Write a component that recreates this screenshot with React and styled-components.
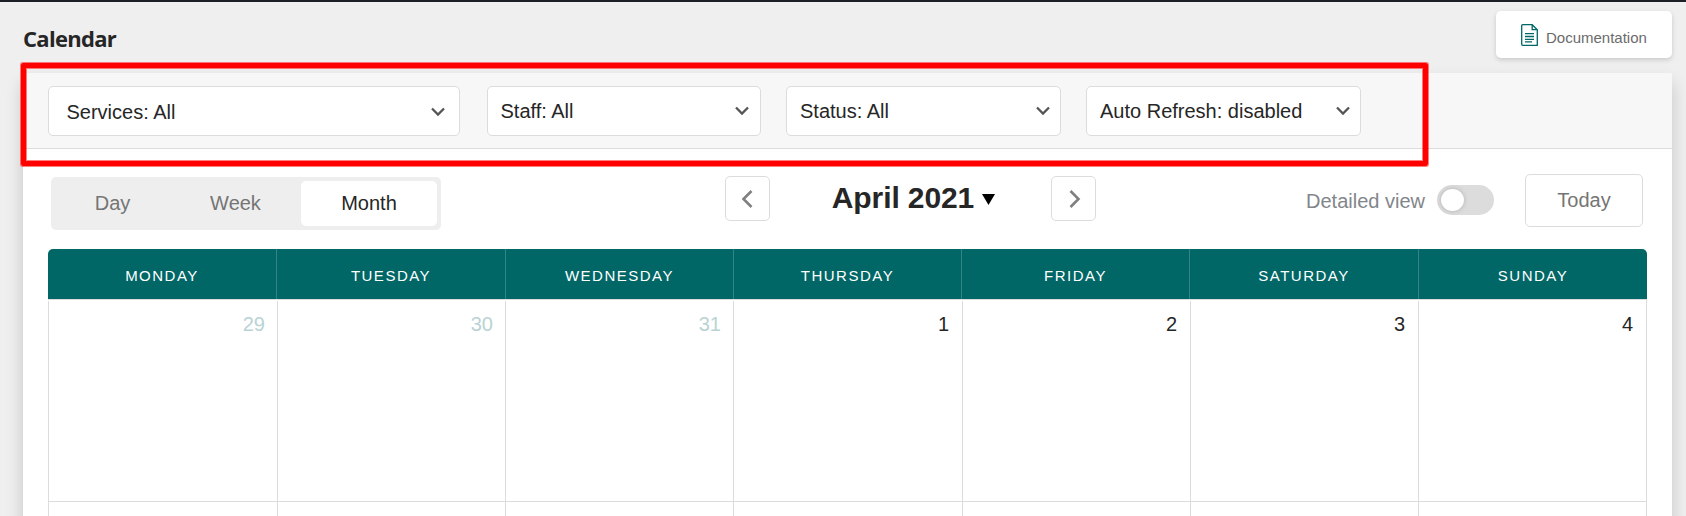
import React from "react";
import styled, { createGlobalStyle } from "styled-components";

const Global = createGlobalStyle`
  * { box-sizing: border-box; }
  body {
    margin: 0;
    background: #efefef;
    font-family: "Liberation Sans", Arial, sans-serif;
    font-size: 20px;
    color: #262626;
    overflow: hidden;
  }
  button { font: inherit; color: inherit; margin: 0; padding: 0; background: none; border: 0; }
`;

const Page = styled.div`
  position: relative;
  height: 516px;
  overflow: hidden;
  border-top: 2px solid #1d2125;
  padding: 0 14px 0 23px;
`;

const PageHeader = styled.header`
  display: flex;
  justify-content: space-between;
  align-items: flex-start;
  height: 71px;
  padding-top: 9px;
`;

const Title = styled.h1`
  margin: 10px 0 0;
  font: 700 22px/34px "Open Sans", sans-serif;
  letter-spacing: -0.7px;
`;

const DocButton = styled.button`
  display: flex;
  align-items: center;
  gap: 8px;
  width: 176px;
  height: 47px;
  padding-left: 25px;
  border-radius: 5px;
  background: #fff;
  box-shadow: 0 2px 5px rgba(0, 0, 0, 0.16);
  font-size: 15px;
  color: #6b6b6b;

  span { margin-top: 6px; }
`;

const Panel = styled.main`
  height: 520px;
  background: #fff;
  box-shadow: 0 10px 16px rgba(0, 0, 0, 0.18);
`;

const Filters = styled.div`
  display: flex;
  gap: 25px;
  height: 76px;
  padding: 13px 25px 0;
  background: #f7f7f7;
  border-bottom: 1px solid #dcdcdc;
`;

const Select = styled.button`
  display: flex;
  align-items: center;
  justify-content: space-between;
  width: ${(p) => p.$width}px;
  height: 50px;
  padding: 0 ${(p) => p.$end}px 0 ${(p) => p.$inset}px;
  margin-right: ${(p) => p.$after || 0}px;
  background: #fff;
  border: 1px solid #dcdcdc;
  border-radius: 5px;

  > * { margin-top: ${(p) => p.$drop || 0}px; }
`;

const Toolbar = styled.div`
  display: grid;
  grid-template-columns: 674px auto 1fr;
  align-items: start;
  height: 100px;
  padding: 25px 29px 0 28px;
`;

const Segments = styled.div`
  display: flex;
  width: 390px;
  height: 53px;
  margin-top: 3px;
  padding: 4px;
  background: #eee;
  border-radius: 5px;
`;

const Segment = styled.button`
  width: ${(p) => p.$width}px;
  height: 45px;
  border-radius: 5px;
  color: ${(p) => (p.$active ? "#262626" : "#757575")};
  background: ${(p) => (p.$active ? "#fff" : "transparent")};
`;

const MonthNav = styled.div`
  display: flex;
  align-items: center;
  margin-top: 2px;
`;

const NavButton = styled.button`
  display: grid;
  place-items: center;
  width: 45px;
  height: 45px;
  border: 1px solid #dcdcdc;
  border-radius: 5px;
`;

const MonthLabel = styled.div`
  display: flex;
  align-items: center;
  justify-content: center;
  gap: 8px;
  width: 281px;
  padding: 0 0 1px 6px;
  font-size: 30px;
  font-weight: 700;
  letter-spacing: -0.1px;

  svg { margin-top: 3px; }
`;

const ViewOptions = styled.div`
  display: flex;
  justify-content: flex-end;
  align-items: center;
  color: #82868b;

  span { margin-top: 1px; }
`;

const Switch = styled.div`
  width: 57px;
  height: 30px;
  margin: 0 31px 1px 12px;
  padding: 4px;
  border-radius: 15px;
  background: #dcdcdc;
`;

const Knob = styled.div`
  width: 23px;
  height: 22px;
  border-radius: 50%;
  background: #fff;
  box-shadow: 0 0 5px rgba(0, 0, 0, 0.2);
`;

const TodayButton = styled.button`
  width: 118px;
  height: 53px;
  border: 1px solid #dcdcdc;
  border-radius: 5px;
  color: #757575;
`;

const Calendar = styled.section`
  margin: 0 25px;
`;

const Weekdays = styled.div`
  display: grid;
  grid-template-columns: 228px 229px 228px 228px 228px 229px 229px;
  height: 50px;
  background: #006666;
  border-radius: 5px 5px 0 0;
`;

const Weekday = styled.div`
  display: grid;
  place-items: center;
  font-size: 15px;
  letter-spacing: 1.5px;
  color: #fff;
  padding-top: 2px;
  & + & { border-left: 1px solid #338585; }
`;

const Week = styled.div`
  display: grid;
  grid-template-columns: 229px 228px 228px 229px 228px 228px 228px;
  height: 203px;
  border-bottom: 1px solid #dcdcdc;
  border-right: 1px solid #dcdcdc;
  border-top: ${(p) => (p.$first ? "1px solid #dcdcdc" : "0")};
  padding-top: ${(p) => (p.$first ? 1 : 0)}px;
`;

const Day = styled.div`
  padding: 12px ${(p) => (p.$muted ? 12 : 13)}px 0 0;
  text-align: right;
  line-height: 23px;
  color: ${(p) => (p.$muted ? "#b9d3d4" : "#262626")};
  border-left: 1px solid #dcdcdc;
`;

const Highlight = styled.div`
  position: absolute;
  left: 21px;
  top: 61px;
  width: 1407px;
  height: 103px;
  border: 5px solid #f00;
  border-radius: 2px;
  box-shadow: 0 0 0 1px rgba(255, 0, 0, 0.5), inset 0 0 0 1px rgba(255, 0, 0, 0.5);
  pointer-events: none;
`;

const Chevron = () => (
  <svg width="20" height="20" viewBox="0 0 20 20" fill="none" stroke="#555" strokeWidth="2.3">
    <path d="M4 6.5l6 6 6-6" />
  </svg>
);

const Arrow = ({ d }) => (
  <svg width="20" height="20" viewBox="0 0 20 20" fill="none" stroke="#808080" strokeWidth="2.6">
    <path d={d} />
  </svg>
);

const DocIcon = () => (
  <svg width="17" height="22" viewBox="0 0 17 22" fill="none" stroke="#006666" strokeWidth="1.3">
    <path d="M11.2 .7H1.7a1 1 0 0 0-1 1v18.6a1 1 0 0 0 1 1h14.6V5.700z" />
    <path d="M11.2 .7v5h5" />
    <path d="M4 9.700h9M4 12.500h9M4 15.300h9M4 17.900h7" />
  </svg>
);

const FILTERS = [
  { label: "Services: All", width: 412, inset: 17.5, end: 11, after: 2, drop: 2 },
  { label: "Staff: All", width: 274, inset: 12.5, end: 8 },
  { label: "Status: All", width: 275, inset: 13, end: 7 },
  { label: "Auto Refresh: disabled", width: 275, inset: 13, end: 7 },
];
const WEEKDAYS = ["MONDAY", "TUESDAY", "WEDNESDAY", "THURSDAY", "FRIDAY", "SATURDAY", "SUNDAY"];
const DAYS = [29, 30, 31, 1, 2, 3, 4];

export default function App() {
  return (
    <>
      <Global />
      <Page>
        <PageHeader>
          <Title>Calendar</Title>
          <DocButton>
            <DocIcon />
            <span>Documentation</span>
          </DocButton>
        </PageHeader>
        <Panel>
          <Filters>
            {FILTERS.map((f) => (
              <Select key={f.label} $width={f.width} $inset={f.inset} $end={f.end} $after={f.after} $drop={f.drop}>
                <span>{f.label}</span>
                <Chevron />
              </Select>
            ))}
          </Filters>
          <Toolbar>
            <Segments>
              <Segment $width={115}>Day</Segment>
              <Segment $width={131}>Week</Segment>
              <Segment $width={136} $active>Month</Segment>
            </Segments>
            <MonthNav>
              <NavButton aria-label="Previous month"><Arrow d="M13.5 2l-8 8 8 8" /></NavButton>
              <MonthLabel>
                April 2021
                <svg width="13" height="11" viewBox="0 0 13 11"><path d="M0 0h13L6.500 11z" /></svg>
              </MonthLabel>
              <NavButton aria-label="Next month"><Arrow d="M6.5 2l8 8-8 8" /></NavButton>
            </MonthNav>
            <ViewOptions>
              <span>Detailed view</span>
              <Switch><Knob /></Switch>
              <TodayButton>Today</TodayButton>
            </ViewOptions>
          </Toolbar>
          <Calendar>
            <Weekdays>
              {WEEKDAYS.map((d) => <Weekday key={d}>{d}</Weekday>)}
            </Weekdays>
            <Week $first>
              {DAYS.map((d, i) => <Day key={d} $muted={i < 3}>{d}</Day>)}
            </Week>
            <Week>
              {DAYS.map((d) => <Day key={d} />)}
            </Week>
          </Calendar>
        </Panel>
        <Highlight />
      </Page>
    </>
  );
}
